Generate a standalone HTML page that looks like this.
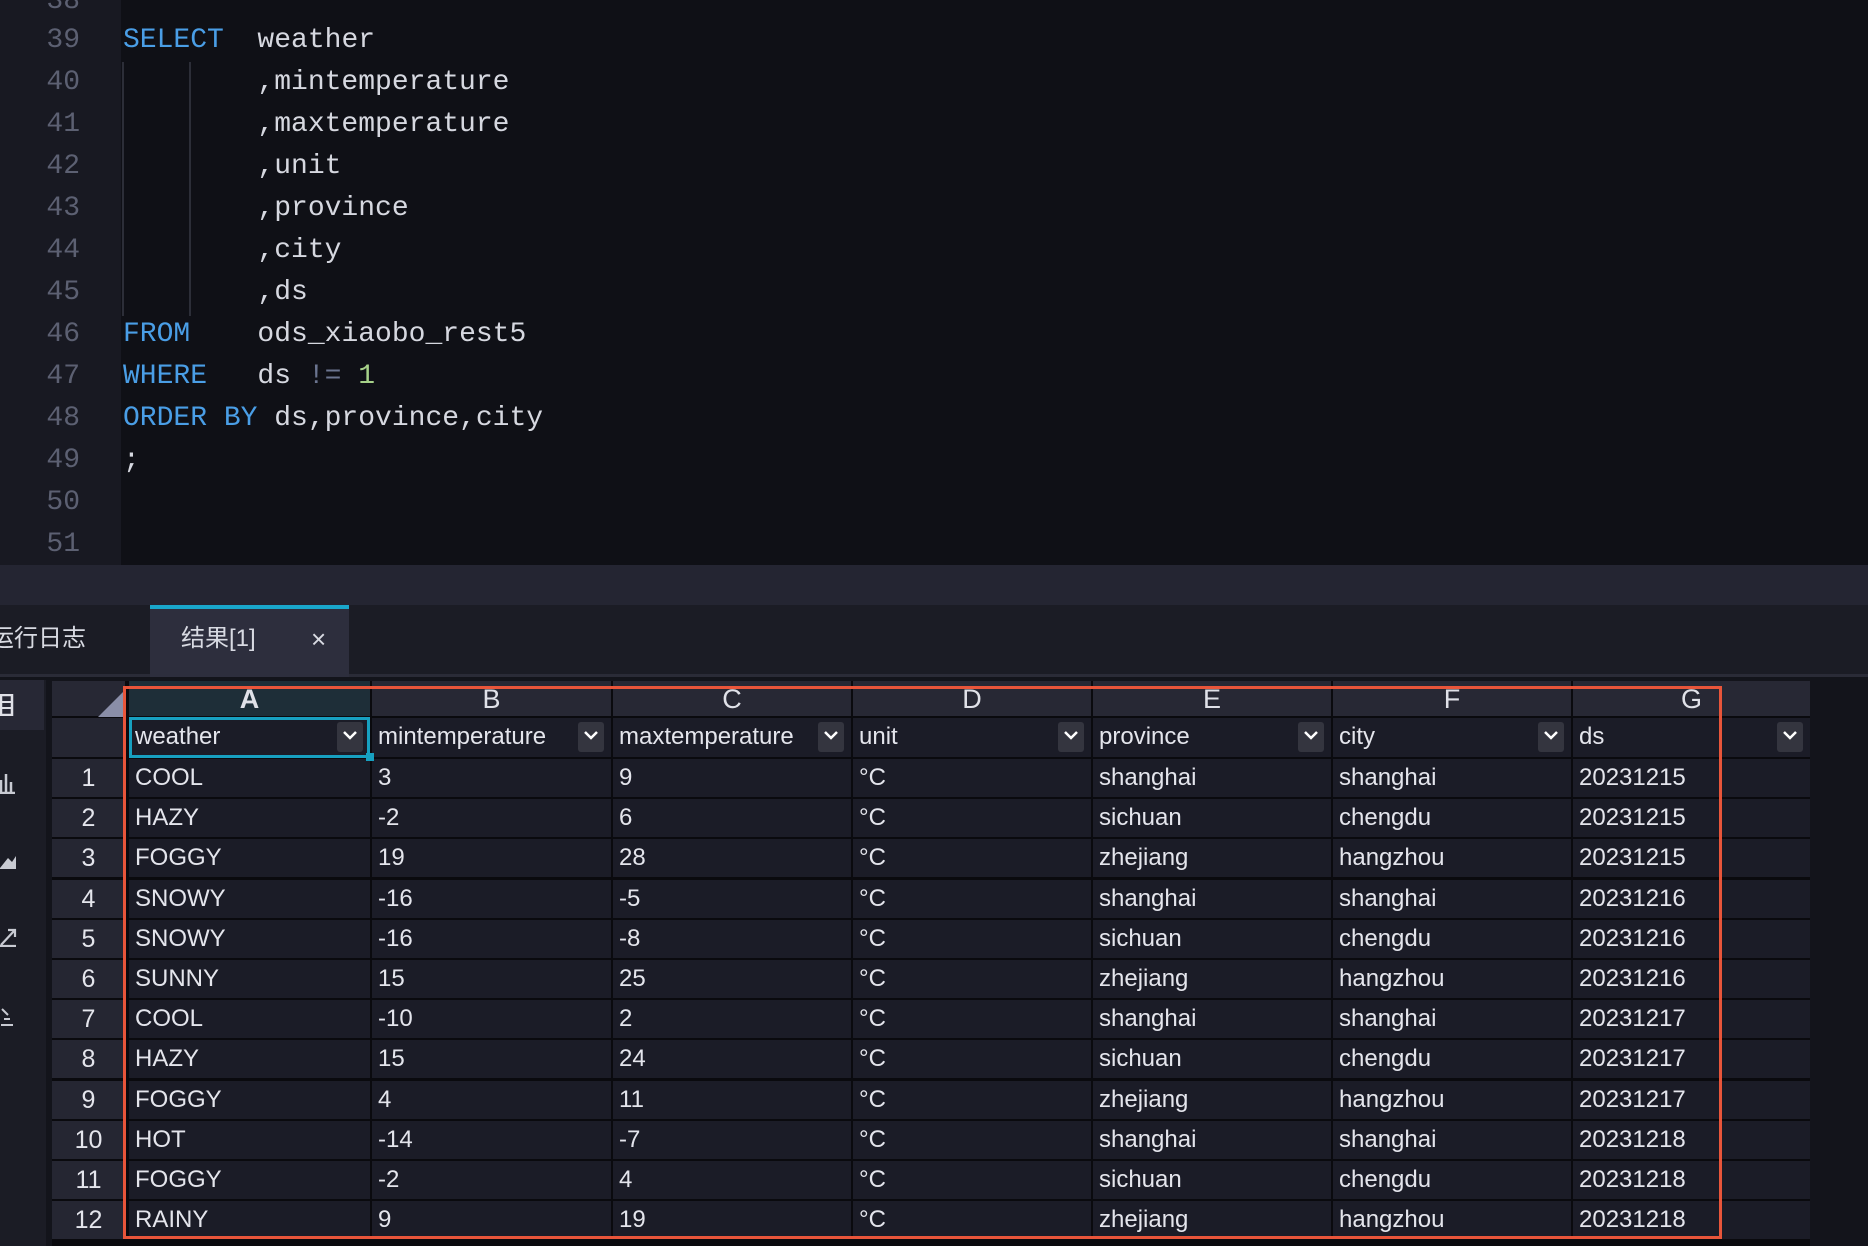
<!DOCTYPE html>
<html><head><meta charset="utf-8"><style>
*{margin:0;padding:0;box-sizing:border-box}
body{width:1868px;height:1246px;overflow:hidden;background:#13141b;position:relative;font-family:"Liberation Sans","Noto Sans CJK SC",sans-serif}
.ed{position:absolute;left:0;top:0;width:1868px;height:565px;background:#0f1016}
.gut{position:absolute;left:0;top:0;width:121px;height:565px;background:#181922}
.ln{position:absolute;left:0;width:80px;text-align:right;color:#5c6072;font:28px "Liberation Mono","DejaVu Sans Mono",monospace;height:42px;line-height:42px}
.cl{position:absolute;left:123px;color:#d6d8e0;font:28px "Liberation Mono","DejaVu Sans Mono",monospace;height:42px;line-height:42px;white-space:pre}
.k{color:#4a9ee6}.o{color:#6b7590}.n{color:#a6d189}
.guide{position:absolute;width:2px;background:#2c2e38;top:62px;height:254px}
.band{position:absolute;left:0;top:565px;width:1868px;height:40px;background:#242532}
.tabs{position:absolute;left:0;top:605px;width:1868px;height:72px;background:#1b1c25;border-bottom:3px solid #2a2b37}
.tab{position:absolute;top:0;height:72px;color:#d8dae2;font-size:24px;line-height:68px}
.side{position:absolute;left:0;top:680px;width:46px;height:566px;background:#1b1c25}
.tbl{position:absolute;left:52px;top:681px;width:1758px;height:565px;background:#0a0a0e}
.c{position:absolute;background:#1b1c27;color:#e4e5ec;font-size:24px;line-height:38px;padding-left:6px;white-space:nowrap;overflow:hidden}
.h{background:#272834;text-align:center;padding:0;font-size:27px;color:#e0e1e8;line-height:36px}
.rn{background:#252632;text-align:center;padding:0;font-size:25px}
.dd{position:absolute;width:26px;height:30px;background:#34353f;border-radius:3px;top:4px}
.dd svg{position:absolute;left:5px;top:8px}
</style></head><body>
<div class="ed"><div class="gut"></div>
<div class="guide" style="left:122px"></div><div class="guide" style="left:189px"></div>
<div class="ln" style="top:-19px">38</div>
<div class="ln" style="top:20px">39</div><div class="ln" style="top:62px">40</div><div class="ln" style="top:104px">41</div><div class="ln" style="top:146px">42</div><div class="ln" style="top:188px">43</div><div class="ln" style="top:230px">44</div><div class="ln" style="top:272px">45</div><div class="ln" style="top:314px">46</div><div class="ln" style="top:356px">47</div><div class="ln" style="top:398px">48</div><div class="ln" style="top:440px">49</div><div class="ln" style="top:482px">50</div><div class="ln" style="top:524px">51</div>
<div class="cl" style="top:20px"><span class="k">SELECT</span>  weather</div>
<div class="cl" style="top:62px">        ,mintemperature</div>
<div class="cl" style="top:104px">        ,maxtemperature</div>
<div class="cl" style="top:146px">        ,unit</div>
<div class="cl" style="top:188px">        ,province</div>
<div class="cl" style="top:230px">        ,city</div>
<div class="cl" style="top:272px">        ,ds</div>
<div class="cl" style="top:314px"><span class="k">FROM</span>    ods_xiaobo_rest5</div>
<div class="cl" style="top:356px"><span class="k">WHERE</span>   ds <span class="o">!=</span> <span class="n">1</span></div>
<div class="cl" style="top:398px"><span class="k">ORDER BY</span> ds,province,city</div>
<div class="cl" style="top:440px">;</div>
</div>
<div class="band"></div>
<div class="tabs">
<div class="tab" style="left:-10px">运行日志</div>
<div class="tab" style="left:150px;width:199px;background:#2d2e3d;border-top:4px solid #19a7cb"><span style="position:absolute;left:31px;top:-4px">结果[1]</span><span style="position:absolute;left:161px;top:-4px;font-size:26px">×</span></div>
</div>
<div class="side">
<div style="position:absolute;left:0;top:0;width:44px;height:50px;background:#272835"></div>
<svg style="position:absolute;left:0;top:14px" width="14" height="22"><rect x="1" y="1" width="11" height="20" fill="none" stroke="#e0e1e8" stroke-width="2.5"/><line x1="1" y1="8" x2="12" y2="8" stroke="#e0e1e8" stroke-width="2"/><line x1="1" y1="14" x2="12" y2="14" stroke="#e0e1e8" stroke-width="2"/></svg>
<svg style="position:absolute;left:0;top:90px" width="16" height="24"><path d="M1 22V10M6 22V4M11 22V12M0 23h15" stroke="#c8cad2" stroke-width="2.5" fill="none"/></svg>
<svg style="position:absolute;left:0;top:170px" width="18" height="20"><path d="M0 18L8 8L12 12L16 6V19H0Z" fill="#c8cad2"/></svg>
<svg style="position:absolute;left:0;top:245px" width="18" height="22"><path d="M1 20L14 6M8 5h7v7M0 21h16" stroke="#c8cad2" stroke-width="2.2" fill="none"/></svg>
<svg style="position:absolute;left:0;top:325px" width="16" height="22"><path d="M2 4l6 6M1 20h12M4 14h6" stroke="#c8cad2" stroke-width="2" fill="none"/></svg>
</div>
<div class="tbl" id="t"></div>
<div style="position:absolute;left:123px;top:686px;width:1599px;height:553px;border:3px solid #e8553a;pointer-events:none"></div>
<script>
var t=document.getElementById('t');
var xs=[0,75,318,559,799,1039,1279,1519,1758];
var L='ABCDEFG',H=['weather','mintemperature','maxtemperature','unit','province','city','ds'];
var R=[['COOL',3,9,'shanghai','shanghai',20231215],['HAZY',-2,6,'sichuan','chengdu',20231215],['FOGGY',19,28,'zhejiang','hangzhou',20231215],['SNOWY',-16,-5,'shanghai','shanghai',20231216],['SNOWY',-16,-8,'sichuan','chengdu',20231216],['SUNNY',15,25,'zhejiang','hangzhou',20231216],['COOL',-10,2,'shanghai','shanghai',20231217],['HAZY',15,24,'sichuan','chengdu',20231217],['FOGGY',4,11,'zhejiang','hangzhou',20231217],['HOT',-14,-7,'shanghai','shanghai',20231218],['FOGGY',-2,4,'sichuan','chengdu',20231218],['RAINY',9,19,'zhejiang','hangzhou',20231218]];
var s='';
function cell(x,y,w,h,cls,txt,st){s+='<div class="c '+cls+'" style="left:'+x+'px;top:'+y+'px;width:'+w+'px;height:'+h+'px;'+(st||'')+'">'+txt+'</div>';}
cell(0,0,73,35,'h','');
s+='<svg style="position:absolute;left:34px;top:8px" width="40" height="28"><path d="M40 0V28H12Z" fill="#8a8ea8"/></svg>';
cell(0,37,73,39,'rn','');
for(var j=0;j<7;j++){var x=xs[j+1]+2,w=xs[j+2]-xs[j+1]-2;
cell(x,0,w,35,'h',L[j],j==0?'background:#1e2e38;font-weight:bold':'');
cell(x,37,w,39,'',H[j]+'<div class="dd" style="left:'+(w-33)+'px"><svg width="16" height="12"><path d="M2 2l6 6 6-6" stroke="#fff" stroke-width="2.5" fill="none"/></svg></div>');}
for(var i=0;i<12;i++){var y=78+i*40.2,r=R[i];var v=[r[0],r[1],r[2],'°C',r[3],r[4],r[5]];
cell(0,y,73,38,'rn',i+1);
for(var j=0;j<7;j++){var x=xs[j+1]+2,w=xs[j+2]-xs[j+1]-2;cell(x,y,w,38,'',v[j]);}}
s+='<div style="position:absolute;left:77px;top:36px;width:241px;height:41px;border:3px solid #17a0c0"></div><div style="position:absolute;left:314px;top:72px;width:8px;height:8px;background:#17a0c0"></div>';
t.innerHTML=s;
</script>
</body></html>
